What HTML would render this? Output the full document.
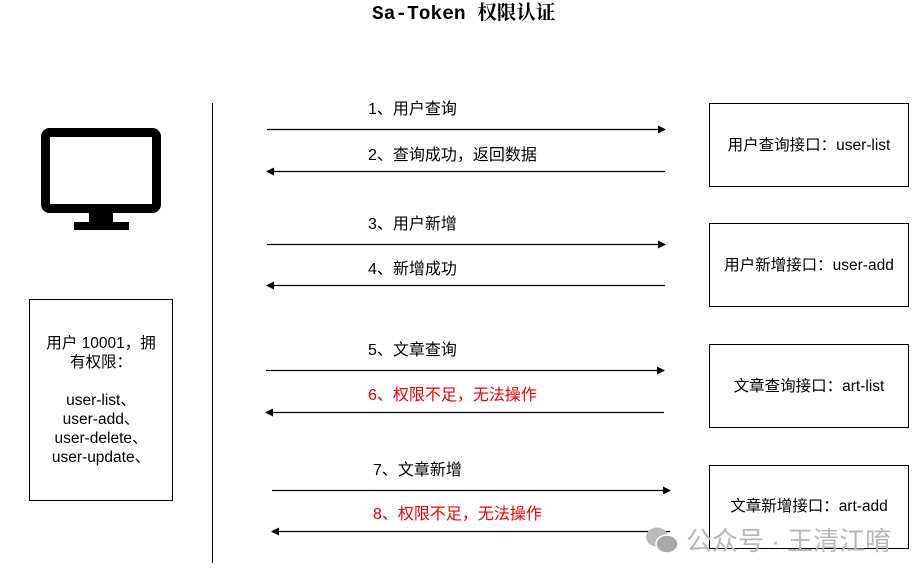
<!DOCTYPE html>
<html><head><meta charset="utf-8"><style>
body{margin:0;width:922px;height:578px;background:#fff;position:relative;overflow:hidden;font-family:"Liberation Sans","Noto Sans CJK SC",sans-serif;}
.t{position:absolute;font-size:16px;color:#000;white-space:nowrap;line-height:18px}
.r{color:#e00}
.box{position:absolute;border:1px solid #000;box-sizing:border-box;display:flex;align-items:center;justify-content:center;text-align:center;font-size:15.5px;line-height:19px}
</style></head><body>
<div class="t" style="left:372px;top:3px;font-family:'Liberation Mono','Noto Serif CJK SC',serif;font-weight:bold;font-size:19.5px;line-height:22px">Sa-Token 权限认证</div>
<svg width="922" height="578" style="position:absolute;left:0;top:0">
<defs><marker id="a" markerWidth="8" markerHeight="8" refX="7" refY="4" orient="auto" markerUnits="userSpaceOnUse"><path d="M0,0 L8,4 L0,8 z" fill="#000"/></marker></defs>
<rect x="45.5" y="132.5" width="111" height="76" rx="4" fill="none" stroke="#000" stroke-width="9"/>
<rect x="89" y="212" width="24" height="11" fill="#000"/>
<rect x="74" y="222" width="55" height="8" fill="#000"/>
<line x1="212.5" y1="103" x2="212.5" y2="563" stroke="#000"/>
<g stroke="#000" stroke-width="1.2" marker-end="url(#a)">
<line x1="267" y1="129.5" x2="665" y2="129.5"/>
<line x1="665" y1="171.5" x2="267" y2="171.5"/>
<line x1="267" y1="244.5" x2="665" y2="244.5"/>
<line x1="665" y1="285.5" x2="267" y2="285.5"/>
<line x1="266" y1="370.5" x2="664" y2="370.5"/>
<line x1="664" y1="412.5" x2="266" y2="412.5"/>
<line x1="272" y1="490.5" x2="670" y2="490.5"/>
<line x1="670" y1="531.5" x2="272" y2="531.5"/>
</g>
</svg>
<div class="t" style="left:368px;top:101px">1、用户查询</div>
<div class="t" style="left:368px;top:147px">2、查询成功，返回数据</div>
<div class="t" style="left:368px;top:216px">3、用户新增</div>
<div class="t" style="left:368px;top:261px">4、新增成功</div>
<div class="t" style="left:368px;top:342px">5、文章查询</div>
<div class="t r" style="left:368px;top:387px">6、权限不足，无法操作</div>
<div class="t" style="left:373px;top:462px">7、文章新增</div>
<div class="t r" style="left:373px;top:506px">8、权限不足，无法操作</div>
<div class="box" style="left:29px;top:299px;width:144px;height:202px">用户 10001，拥<br>有权限：<br><br>user-list、<br>user-add、<br>user-delete、<br>user-update、</div>
<div class="box" style="left:709px;top:103px;width:200px;height:84px">用户查询接口：user-list</div>
<div class="box" style="left:709px;top:223px;width:200px;height:84px">用户新增接口：user-add</div>
<div class="box" style="left:709px;top:344px;width:200px;height:84px">文章查询接口：art-list</div>
<div class="box" style="left:709px;top:465px;width:200px;height:84px;padding-bottom:2px">文章新增接口：art-add</div>
<svg width="40" height="32" style="position:absolute;left:643px;top:525px">
<ellipse cx="14" cy="12" rx="11" ry="9.5" fill="#bbb"/>
<ellipse cx="24" cy="19" rx="11" ry="9" fill="#a8a8a8" stroke="#fff" stroke-width="1.5"/>
</svg>
<div class="t" style="left:686px;top:526px;font-size:26px;line-height:30px;color:#b8b8b8">公众号 · 王清江唷</div>
</body></html>
